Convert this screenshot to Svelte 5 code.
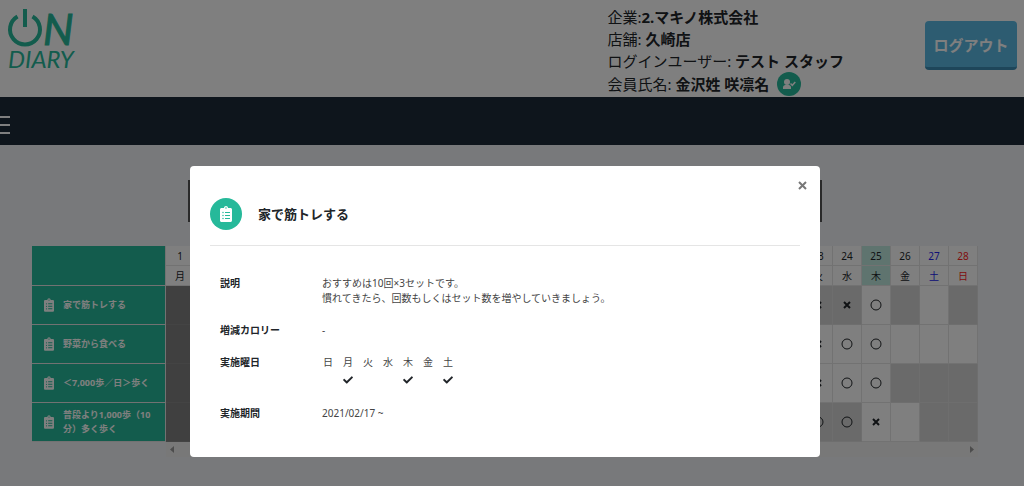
<script>
  const clipboard = 'M336 64h-80c0-35.3-28.7-64-64-64s-64 28.7-64 64H48C21.5 64 0 85.5 0 112v352c0 26.5 21.5 48 48 48h288c26.5 0 48-21.5 48-48V112c0-26.5-21.5-48-48-48zM96 424c-13.3 0-24-10.7-24-24s10.7-24 24-24 24 10.7 24 24-10.7 24-24 24zm0-96c-13.3 0-24-10.7-24-24s10.7-24 24-24 24 10.7 24 24-10.7 24-24 24zm0-96c-13.3 0-24-10.7-24-24s10.7-24 24-24 24 10.7 24 24-10.7 24-24 24zm96-192c13.3 0 24 10.7 24 24s-10.7 24-24 24-24-10.7-24-24 10.7-24 24-24zm128 368c0 4.4-3.6 8-8 8H168c-4.4 0-8-3.6-8-8v-16c0-4.4 3.6-8 8-8h144c4.4 0 8 3.6 8 8v16zm0-96c0 4.4-3.6 8-8 8H168c-4.4 0-8-3.6-8-8v-16c0-4.4 3.6-8 8-8h144c4.4 0 8 3.6 8 8v16zm0-96c0 4.4-3.6 8-8 8H168c-4.4 0-8-3.6-8-8v-16c0-4.4 3.6-8 8-8h144c4.4 0 8 3.6 8 8v16z';
  const check = 'M173.9 439.4L7.5 273c-10-10-10-26.2 0-36.2l36.2-36.2c10-10 26.2-10 36.2 0L192 312.7 432.1 72.6c10-10 26.2-10 36.2 0l36.2 36.2c10 10 10 26.2 0 36.2L210.1 439.4c-10 10-26.2 10-36.2 0z';

  const weekdays = ['日', '月', '火', '水', '木', '金', '土'];
  const activeDays = [1, 4, 6];
  const today = 25;

  const days = Array.from({ length: 28 }, (_, i) => ({
    date: i + 1,
    week: (i + 1) % 7
  }));

  // marks for the 23rd onward: x = missed, o = done, upper case or '-' = off day
  const tasks = [
    { name: '家で筋トレする', marks: 'XXo-.-' },
    { name: '野菜から食べる', marks: 'xoo...' },
    { name: '＜7,000歩／日＞歩く', marks: 'xoo---' },
    { name: '普段より1,000歩（10分）多く歩く', marks: 'OOx.--' }
  ];

  let open = true;

  function markOf(task, date) {
    return date < 23 ? '' : task.marks[date - 23];
  }

  function cellClass(mark) {
    if (mark === '') return 'past';
    return 'XO-'.includes(mark) ? 'off' : '';
  }

  function dayClass(day) {
    if (day.date === today) return 'today';
    if (day.week === 6) return 'sat';
    if (day.week === 0) return 'sun';
    return '';
  }
</script>

<style>
  :global(body) {
    margin: 0;
    background: #f1f3f6;
    color: #212529;
    font-family: "Noto Sans", "Noto Sans CJK JP", sans-serif;
    font-size: 10px;
  }

  button {
    padding: 0;
    border: 0;
    background: none;
    font-family: inherit;
    cursor: pointer;
  }

  svg {
    display: block;
  }

  header {
    display: flex;
    justify-content: space-between;
    padding: 6px 7px 1px;
    background: #fff;
  }

  .logo {
    overflow: visible;
    fill: #26b99a;
    font-family: Lato, sans-serif;
    font-style: italic;
  }

  .logo-arc {
    fill: none;
    stroke: #26b99a;
    stroke-width: 4;
  }

  .logo-n {
    font-size: 43px;
    stroke: #26b99a;
    stroke-width: 1;
  }

  .logo-diary {
    font-size: 24px;
  }

  .account {
    display: flex;
    gap: 81px;
    align-items: flex-start;
  }

  .info {
    font-size: 15px;
    line-height: 22px;
  }

  .member {
    display: flex;
    align-items: center;
    gap: 8px;
    height: 24px;
  }

  .member-icon {
    width: 24px;
    height: 24px;
    border-radius: 50%;
    background: #26b99a;
    fill: #fff;
  }

  .logout {
    margin-top: 15px;
    width: 92px;
    height: 49px;
    border-bottom: 3px solid #3c8db4;
    border-radius: 4px;
    background: #5ab8e2;
    color: #fff;
    font-size: 15px;
    font-weight: bold;
  }

  nav {
    display: flex;
    align-items: center;
    height: 48px;
    padding-top: 7px;
    box-sizing: border-box;
    background: #1d2b38;
  }

  .menu {
    display: grid;
    gap: 6px;
  }

  .menu span {
    width: 10px;
    height: 2px;
    background: #fff;
  }

  main {
    padding: 35px 46px 0 32px;
  }

  .month {
    height: 42px;
    max-width: 628px;
    margin: 0 auto 24px;
    border: solid #555;
    border-width: 0 3px;
  }

  .calendar {
    width: 100%;
    table-layout: fixed;
    border-collapse: separate;
    border-spacing: 0;
  }

  .calendar th,
  .calendar td {
    box-sizing: border-box;
    padding: 0;
    border: solid #e4e4e4;
    border-width: 0 1px 1px 0;
    background: #fff;
    text-align: center;
  }

  .calendar thead th {
    height: 20px;
    font-size: 10px;
    line-height: 18px;
    font-weight: normal;
  }

  .calendar tbody td {
    height: 39px;
  }

  .calendar .task {
    width: 134px;
    background: #26b99a;
    color: #fff;
  }

  .calendar .today {
    background: #bfe9df;
  }

  .calendar .sat {
    color: #22e;
  }

  .calendar .sun {
    color: #f22;
  }

  .calendar .past {
    border-color: #888;
    background: #808080;
  }

  .calendar .off {
    border-color: #dcdcdc;
    background: #d4d4d4;
  }

  .task-name {
    display: flex;
    align-items: center;
    gap: 9px;
    padding: 0 8px 0 12px;
    font-size: 9px;
    line-height: 14px;
    text-align: left;
  }

  .task-name svg {
    flex: none;
    fill: #fff;
  }

  .mark {
    margin: 0 auto;
    fill: none;
    stroke: #212529;
  }

  .scroll {
    display: flex;
    justify-content: space-between;
    margin-left: 134px;
    padding: 4px;
    background: #f1f1f1;
    fill: #999;
  }

  .backdrop {
    position: fixed;
    inset: 0;
    display: flex;
    justify-content: center;
    align-items: flex-start;
    padding: 166px 14px 0 0;
    background: rgba(0, 0, 0, 0.5);
  }

  .modal {
    position: relative;
    width: 100%;
    max-width: 630px;
    box-sizing: border-box;
    padding: 32px 20px 36px;
    border-radius: 4px;
    background: #fff;
  }

  .close {
    position: absolute;
    top: 15px;
    right: 13px;
    stroke: #777;
  }

  .modal-head {
    display: flex;
    align-items: center;
    gap: 16px;
    padding-bottom: 15px;
    border-bottom: 1px solid #e5e5e5;
  }

  .modal-head h2 {
    margin: 0;
    font-size: 13px;
    line-height: 20px;
  }

  .modal-icon {
    display: grid;
    place-items: center;
    width: 32px;
    height: 32px;
    border-radius: 50%;
    background: #26b99a;
    fill: #fff;
  }

  dl {
    display: grid;
    grid-template-columns: 102px 1fr;
    row-gap: 17px;
    margin: 0;
    padding: 30px 10px 0;
    line-height: 15px;
  }

  dt {
    font-weight: bold;
  }

  dd {
    margin: 0;
    color: #444;
  }

  .week {
    display: flex;
    gap: 8px;
    margin: 0;
    padding: 0;
    list-style: none;
  }

  .week li {
    display: grid;
    grid-template-rows: 15px 19px;
    place-items: center;
    width: 12px;
  }

  .week svg {
    fill: #212529;
  }
</style>

<header>
  <svg class="logo" width="70" height="66" viewBox="7 6 70 66" role="img" aria-label="ON DIARY">
    <path class="logo-arc" d="M17.5 16.5A15 15 0 1 0 32.5 16.5" />
    <rect x="23" y="9" width="4" height="18" />
    <text class="logo-n" x="43" y="45">N</text>
    <text class="logo-diary" x="8" y="68">DIARY</text>
  </svg>
  <div class="account">
    <div class="info">
      <div>企業:<b>2.マキノ株式会社</b></div>
      <div>店舗: <b>久崎店</b></div>
      <div>ログインユーザー: <b>テスト スタッフ</b></div>
      <div class="member">
        <span>会員氏名: <b>金沢姓 咲凛名</b></span>
        <svg class="member-icon" viewBox="0 0 24 24">
          <circle cx="10" cy="10" r="3" />
          <path d="M6 17v-1.5q0-2.5 2.5-2.5h3q2.5 0 2.5 2.5V17z" />
          <path d="M13.5 11.5l1.8 1.8 3-3.3" fill="none" stroke="#fff" stroke-width="1.5" />
        </svg>
      </div>
    </div>
    <button class="logout">ログアウト</button>
  </div>
</header>

<nav>
  <button class="menu" aria-label="メニュー">
    <span></span>
    <span></span>
    <span></span>
  </button>
</nav>

<main>
  <div class="month"></div>
  <table class="calendar">
    <thead>
      <tr>
        <th class="task" rowspan="2"></th>
        {#each days as day}
          <th class={dayClass(day)}>{day.date}</th>
        {/each}
      </tr>
      <tr>
        {#each days as day}
          <th class={dayClass(day)}>{weekdays[day.week]}</th>
        {/each}
      </tr>
    </thead>
    <tbody>
      {#each tasks as task}
        <tr>
          <th class="task" scope="row">
            <div class="task-name">
              <svg width="10" height="14" viewBox="0 0 384 512"><path d={clipboard} /></svg>
              <span>{task.name}</span>
            </div>
          </th>
          {#each days as day}
            {@const mark = markOf(task, day.date)}
            <td class={cellClass(mark)}>
              {#if mark === 'o' || mark === 'O'}
                <svg class="mark" width="12" height="12" viewBox="0 0 12 12"><circle cx="6" cy="6" r="5" /></svg>
              {:else if mark === 'x' || mark === 'X'}
                <svg class="mark" width="12" height="12" viewBox="0 0 12 12"><path stroke-width="2" d="M3 3l6 6M9 3l-6 6" /></svg>
              {/if}
            </td>
          {/each}
        </tr>
      {/each}
    </tbody>
  </table>
  <div class="scroll">
    <svg width="5" height="7" viewBox="0 0 5 7"><path d="M4 0v7L0 3.5z" /></svg>
    <svg width="5" height="7" viewBox="0 0 5 7"><path d="M1 0v7l4-3.5z" /></svg>
  </div>
</main>

{#if open}
  <div class="backdrop">
    <div class="modal" role="dialog" aria-modal="true" aria-labelledby="modal-title">
      <button class="close" aria-label="閉じる" on:click={() => open = false}>
        <svg width="9" height="9" viewBox="0 0 9 9"><path stroke-width="2" d="M1 1l7 7M8 1L1 8" /></svg>
      </button>
      <div class="modal-head">
        <span class="modal-icon">
          <svg width="12" height="16" viewBox="0 0 384 512"><path d={clipboard} /></svg>
        </span>
        <h2 id="modal-title">家で筋トレする</h2>
      </div>
      <dl>
        <dt>説明</dt>
        <dd>おすすめは10回×3セットです。<br />慣れてきたら、回数もしくはセット数を増やしていきましょう。</dd>
        <dt>増減カロリー</dt>
        <dd>-</dd>
        <dt>実施曜日</dt>
        <dd>
          <ul class="week">
            {#each weekdays as name, i}
              <li>
                <span>{name}</span>
                {#if activeDays.includes(i)}
                  <svg width="10" height="10" viewBox="0 0 512 512"><path d={check} /></svg>
                {/if}
              </li>
            {/each}
          </ul>
        </dd>
        <dt>実施期間</dt>
        <dd>2021/02/17 ~</dd>
      </dl>
    </div>
  </div>
{/if}
